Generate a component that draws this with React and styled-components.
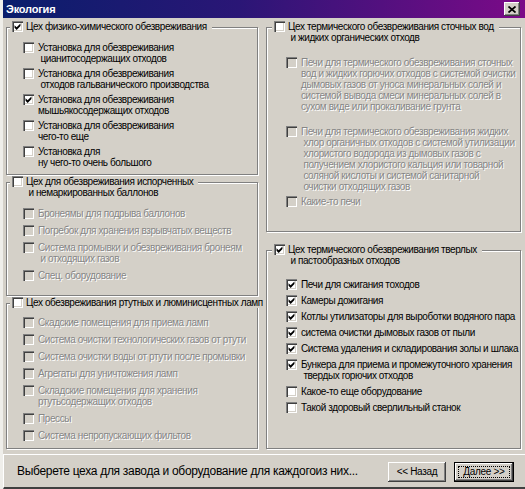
import React from 'react';
import styled, { createGlobalStyle, css } from 'styled-components';

const GlobalStyle = createGlobalStyle`
    html, body {
        margin: 0;
        padding: 0;
        background: #d4d0c8;
    }
    * {
        box-sizing: border-box;
    }
`;

const FACE = '#d4d0c8';

const Window = styled.div`
    width: 525px;
    height: 489px;
    display: flex;
    flex-direction: column;
    background: ${FACE};
    border-left: 3px solid #efeeea;
    font-family: "Liberation Sans", Arial, sans-serif;
    font-size: 10px;
    letter-spacing: -0.4px;
    color: #000;
    overflow: hidden;
`;

const TitleBar = styled.div`
    height: 18px;
    flex: none;
    display: flex;
    align-items: center;
    padding: 0 5px 0 3px;
    background: linear-gradient(90deg, #0a1e6c 0%, #2a1676 45%, #7c0a88 100%);
`;

const TitleText = styled.span`
    color: #fff;
    font-weight: 700;
    font-size: 11px;
    letter-spacing: -0.2px;
`;

const CloseButton = styled.button`
    margin-left: auto;
    width: 16px;
    height: 14px;
    padding: 0;
    border: 0;
    display: flex;
    align-items: center;
    justify-content: center;
    background: ${FACE};
    box-shadow: inset -1px -1px #404040, inset 1px 1px #fff, inset -2px -2px #808080;
`;

const Body = styled.div`
    display: grid;
    grid-template-columns: 252px 255px;
    column-gap: 8px;
    padding: 3px 4px 0 3px;
    height: 433px;
    flex: none;
`;

const Column = styled.div`
    display: flex;
    flex-direction: column;
`;

const Group = styled.section`
    height: ${p => p.$h}px;
    margin-top: ${p => p.$top}px;
    border: 1px solid #808080;
    box-shadow: inset 1px 1px #fff, 1px 1px #fff;
    display: flex;
    flex-direction: column;
`;

const GroupHeader = styled.div`
    display: flex;
    align-items: flex-start;
    align-self: flex-start;
    gap: 3px;
    margin: -7px 0 0 ${p => p.$left}px;
    padding: 0 5px 0 2px;
    background: ${FACE};
    line-height: 11px;
`;

const ItemList = styled.div`
    display: flex;
    flex-direction: column;
    gap: ${p => p.$gap}px;
    padding: ${p => p.$top}px 0 0 ${p => p.$left}px;
`;

const CheckRow = styled.div`
    display: flex;
    align-items: flex-start;
    gap: 4px;
    margin-top: ${p => p.$mt || 0}px;
    line-height: 11px;
`;

const Box = styled.span`
    flex: none;
    width: 11px;
    height: 11px;
    display: block;
    background: ${p => (p.$disabled ? FACE : '#fff')};
    box-shadow: inset 1px 1px #808080, inset 2px 2px #404040, inset -1px -1px #fff, inset -2px -2px ${FACE};
`;

const Label = styled.span`
    white-space: pre;
    ${p => p.$disabled && css`
        color: #868686;
        text-shadow: 1px 1px 0 #fff;
    `}
`;

const StatusBar = styled.div`
    flex: 1;
    margin-top: 3px;
    display: flex;
    align-items: center;
    padding: 0 11px 0 13px;
    border-top: 1px solid #fff;
    border-left: 1px solid #fff;
    border-bottom: 2px solid #404040;
`;

const StatusText = styled.span`
    font-size: 12px;
    letter-spacing: -0.3px;
`;

const Buttons = styled.div`
    margin-left: auto;
    display: flex;
    gap: 8px;
    margin-top: 1px;
`;

const Button = styled.button`
    height: 20px;
    width: ${p => p.$w}px;
    padding: 0;
    font-family: "Liberation Sans", Arial, sans-serif;
    font-size: 10px;
    letter-spacing: -0.3px;
    color: #000;
    background: ${FACE};
    border: ${p => (p.$default ? '1px solid #000' : '0')};
    box-shadow: inset -1px -1px #404040, inset 1px 1px #fff, inset -2px -2px #808080;
    ${p => p.$default && css`
        outline: 1px dotted #000;
        outline-offset: -5px;
    `}
`;

const Check = ({ checked, disabled }) => (
    <Box $disabled={disabled}>
        {checked && (
            <svg width="11" height="11" viewBox="0 0 13 13">
                <polygon points="3,5 5.5,7.5 10,3 10,6 5.5,10.5 3,8" fill={disabled ? '#808080' : '#000'} />
            </svg>
        )}
    </Box>
);

const Item = ({ text, checked, disabled, mt }) => (
    <CheckRow $mt={mt}>
        <Check checked={checked} disabled={disabled} />
        <Label $disabled={disabled}>{Array.isArray(text) ? text.join('\n') : text}</Label>
    </CheckRow>
);

const GroupBox = ({ title, checked, h, top, headLeft, list }) => (
    <Group $h={h} $top={top}>
        <GroupHeader $left={headLeft}>
            <Check checked={checked} />
            <Label>{Array.isArray(title) ? title.join('\n') : title}</Label>
        </GroupHeader>
        <ItemList $gap={list.gap} $top={list.top} $left={list.left}>
            {list.items.map((it, id) => <Item key={id} {...it} />)}
        </ItemList>
    </Group>
);

const leftGroups = [
    {
        title: 'Цех физико-химического обезвреживания',
        checked: true, h: 148, top: 6, headLeft: 3,
        list: {
            gap: 4, top: 10, left: 16,
            items: [
                { text: ['Установка для обезвреживания', ' цианитосодержащих отходов'] },
                { text: ['Установка для обезвреживания', ' отходов гальванического производства'] },
                { text: ['Установка для обезвреживания', 'мышьякосодержащих отходов'], checked: true },
                { text: ['Установка для обезвреживания', 'чего-то еще'] },
                { text: ['Установка для', 'ну чего-то очень большого'] },
            ],
        },
    },
    {
        title: ['Цех для обезвреживания испорченных', ' и немаркированных баллонов'],
        checked: false, h: 114, top: 7, headLeft: 3,
        list: {
            gap: 6, top: 10, left: 16,
            items: [
                { text: 'Бронеямы для подрыва баллонов', disabled: true },
                { text: 'Погребок для хранения взрывчатых веществ', disabled: true },
                { text: ['Система промывки и обезвреживания бронеям', ' и отходящих газов'], disabled: true },
                { text: 'Спец. оборудование', disabled: true },
            ],
        },
    },
    {
        title: 'Цех обезвреживания ртутных и люминисцентных ламп',
        checked: false, h: 146, top: 7, headLeft: 3,
        list: {
            gap: 6, top: 9, left: 16,
            items: [
                { text: 'Скадские помещения для приема ламп', disabled: true },
                { text: 'Система очистки технологических газов от ртути', disabled: true },
                { text: 'Система очистки воды от ртути после промывки', disabled: true },
                { text: 'Агрегаты для уничтожения ламп', disabled: true },
                { text: ['Складские помещения для хранения', 'ртутьсодержащих отходов'], disabled: true },
                { text: 'Прессы', disabled: true },
                { text: 'Система непропускающих фильтов', disabled: true },
            ],
        },
    },
];

const rightGroups = [
    {
        title: ['Цех термического обезвреживания сточных вод', ' и жидких органических отходв'],
        checked: false, h: 205, top: 6, headLeft: 5,
        list: {
            gap: 4, top: 14, left: 19,
            items: [
                {
                    text: [
                        'Печи для термического обезвреживания сточных',
                        'вод и жидких горючих отходов с системой очистки',
                        'дымовых газов от уноса минеральных солей и',
                        'системой вывода смеси минеральных солей в',
                        'сухом виде или прокаливание грунта',
                    ],
                    disabled: true,
                },
                {
                    text: [
                        'Печи для термического обезвреживания жидких',
                        ' хлор органичных отходов с системой утилизации',
                        ' хлористого водорода из дымовых газов с',
                        ' получением хлористого кальция или товарной',
                        ' соляной кислоты и системой санитарной',
                        ' очистки отходящих газов',
                    ],
                    disabled: true, mt: 10,
                },
                { text: 'Какие-то печи', disabled: true },
            ],
        },
    },
    {
        title: ['Цех термического обезвреживания тверлых', ' и пастообразных отходов'],
        checked: true, h: 199, top: 18, headLeft: 5,
        list: {
            gap: 5, top: 13, left: 19,
            items: [
                { text: 'Печи для сжигания тоходов', checked: true },
                { text: 'Камеры дожигания', checked: true },
                { text: 'Котлы утилизаторы для выроботки водяного пара', checked: true },
                { text: 'система очистки дымовых газов от пыли', checked: true },
                { text: 'Система удаления и складирования золы и шлака', checked: true },
                { text: ['Бункера для приема и промежуточного хранения', ' твердых горючих отходов'], checked: true },
                { text: 'Какое-то еще оборудование' },
                { text: 'Такой здоровый сверлильный станок' },
            ],
        },
    },
];

const App = () => {
    return (
        <>
            <GlobalStyle />
            <Window>
                <TitleBar>
                    <TitleText>Экология</TitleText>
                    <CloseButton aria-label="Закрыть">
                        <svg width="8" height="7" viewBox="0 0 8 7">
                            <path d="M0.5 0.5 L7.5 6.5 M7.5 0.5 L0.5 6.5" stroke="#000" strokeWidth="1.7" />
                        </svg>
                    </CloseButton>
                </TitleBar>
                <Body>
                    <Column>
                        {leftGroups.map((g, id) => <GroupBox key={id} {...g} />)}
                    </Column>
                    <Column>
                        {rightGroups.map((g, id) => <GroupBox key={id} {...g} />)}
                    </Column>
                </Body>
                <StatusBar>
                    <StatusText>Выберете цеха для завода и оборудование для каждогоиз них...</StatusText>
                    <Buttons>
                        <Button $w={58}>&lt;&lt; Назад</Button>
                        <Button $w={60} $default>Далее &gt;&gt;</Button>
                    </Buttons>
                </StatusBar>
            </Window>
        </>
    );
};

export default App;
